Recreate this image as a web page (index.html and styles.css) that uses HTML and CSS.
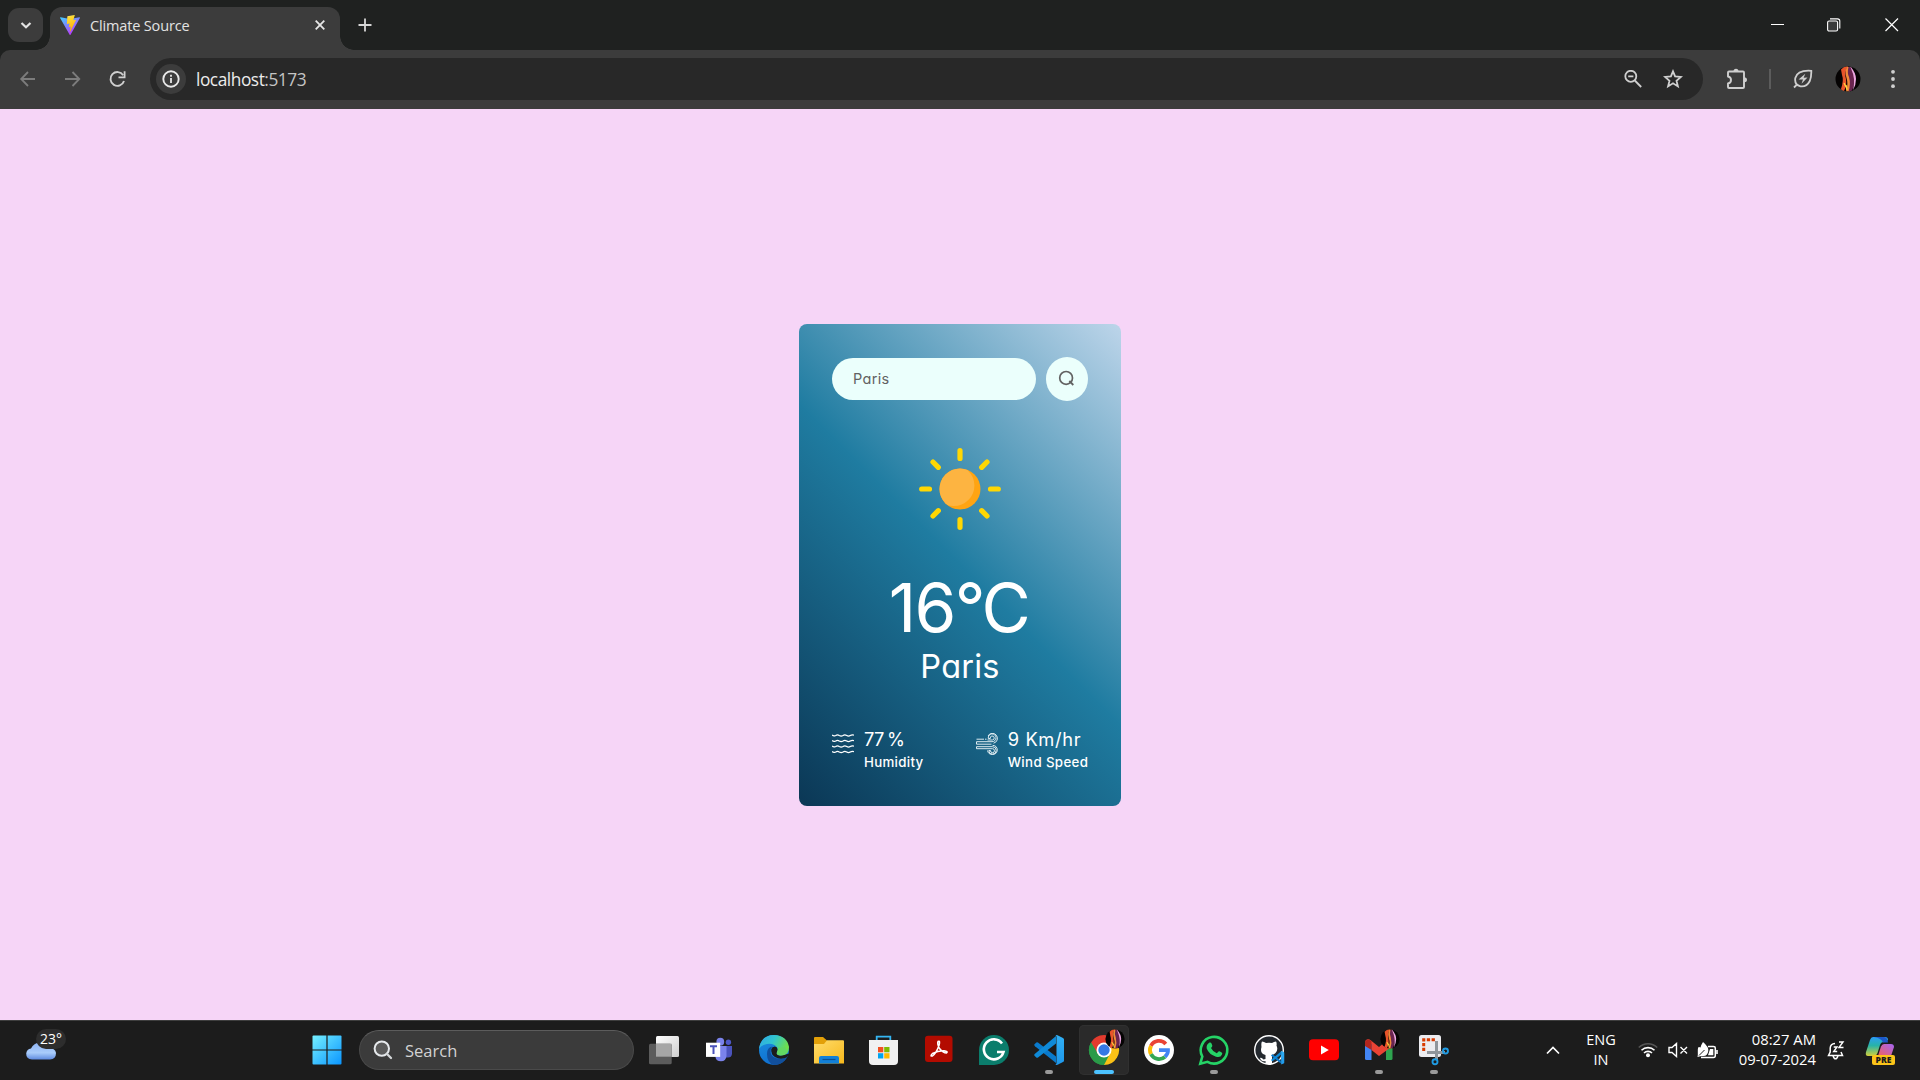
FILE: index.html
```html
<!DOCTYPE html>
<html lang="en">
<head>
<meta charset="utf-8">
<title>Climate Source</title>
<link rel="stylesheet" href="styles.css">
</head>
<body>
<svg class="defs" width="0" height="0" aria-hidden="true">
  <defs>
    <linearGradient id="viteV" x1="0" y1="0" x2=".6" y2="1"><stop offset="0" stop-color="#41d1ff"/><stop offset="1" stop-color="#bd34fe"/></linearGradient>
    <linearGradient id="viteB" x1=".4" y1="0" x2=".6" y2="1"><stop offset="0" stop-color="#ffea83"/><stop offset=".1" stop-color="#ffdd35"/><stop offset="1" stop-color="#ffa800"/></linearGradient>
    <linearGradient id="win" x1="0" y1="0" x2="1" y2="1"><stop offset="0" stop-color="#75f0ff"/><stop offset="1" stop-color="#0a95ff"/></linearGradient>
    <linearGradient id="cloud" x1="0" y1="0" x2="0" y2="1"><stop offset="0" stop-color="#8fb4f4"/><stop offset=".6" stop-color="#a9ccfb"/><stop offset="1" stop-color="#5f8be0"/></linearGradient>
    <linearGradient id="grey" x1="0" y1="0" x2="1" y2="1"><stop offset="0" stop-color="#fff"/><stop offset="1" stop-color="#cfcfcf"/></linearGradient>
    <linearGradient id="edgeT" x1="0" y1="0" x2="1" y2=".4"><stop offset="0" stop-color="#2fa5e8"/><stop offset=".5" stop-color="#31c5cf"/><stop offset="1" stop-color="#6fe04a"/></linearGradient>
    <linearGradient id="edgeB" x1="0" y1="0" x2=".4" y2="1"><stop offset="0" stop-color="#1b8fe0"/><stop offset="1" stop-color="#0f6fd0"/></linearGradient>
    <linearGradient id="fold" x1="0" y1="0" x2="1" y2="1"><stop offset="0" stop-color="#ffdc6b"/><stop offset="1" stop-color="#f7b81c"/></linearGradient>
    <linearGradient id="vsR" x1="0" y1="0" x2="0" y2="1"><stop offset="0" stop-color="#31b0f5"/><stop offset="1" stop-color="#1e97ea"/></linearGradient>
    <linearGradient id="copL" x1="0" y1="0" x2="0" y2="1"><stop offset="0" stop-color="#2b9df5"/><stop offset=".45" stop-color="#27b3a8"/><stop offset="1" stop-color="#d3cf3a"/></linearGradient>
    <linearGradient id="copR" x1="1" y1="0" x2="0" y2="1"><stop offset="0" stop-color="#a565f5"/><stop offset="1" stop-color="#f0605f"/></linearGradient>
    <clipPath id="sunDisc"><circle r="20.500"/></clipPath>
    <symbol id="avatar" viewBox="0 0 26 26">
      <circle cx="13" cy="13" r="12.5" fill="#050303"/>
      <path d="M6 3.500Q9 0 13 .6Q9 6 11 13Q12 20 9 25Q6 24 6 23Q9 14 7 9Z" fill="#e8542a"/>
      <path d="M12 1Q9.500 6 11.500 12Q13.500 18 11 25.300L15 25.200Q18 19 18.500 13Q18.500 7 15 1Z" fill="#f08a3a"/>
      <path d="M13.500 1Q12 7 14 11Q16 18 13.500 25.500L17 24.500Q20 18 19.500 12Q18 5 16 1Z" fill="#6a2450"/>
      <path d="M16 1.200Q21 7 21 13T18 24.200Q19.500 18 19 13T15.500 1Z" fill="#eda6e0"/>
      <path d="M9 17l2 4M11 19l1 5" stroke="#ffd23e" stroke-width="1.300"/>
    </symbol>
    <symbol id="vscode" viewBox="0 0 30 30">
      <path d="M0.500 9.300L2.300 7.600Q3.200 7 4 7.600L22 21.500V28L1 11.200Q-.2 10.200.5 9.300Z" fill="#0a7acc"/>
      <path d="M.5 20.700L2.300 22.400Q3.200 23 4 22.400L22 8.500V1L1 18.800Q-.2 19.800.5 20.700Z" fill="#0f8ad8"/>
      <path d="M21.500.3Q22.500-.2 23.500.2L29 3Q30 3.500 30 4.600V25.400Q30 26.500 29 27L23.500 29.800Q22.300 30.200 21.300 29.400Q22.500 29.600 22.500 28V2Q22.500.5 21.500.3Z" fill="url(#vsR)"/>
    </symbol>
  </defs>
</svg>

<header class="tabs">
  <div class="tab-menu"><svg width="14" height="14" viewBox="0 0 14 14"><path d="M2.500 5L7 9.300L11.500 5" fill="none" stroke="#e3e3e3" stroke-width="2.200"/></svg></div>
  <div class="tab">
    <svg class="fav" width="20" height="20" viewBox="0 0 256 257"><path fill="url(#viteV)" d="M255.153 37.938L134.897 252.976c-2.483 4.440-8.862 4.466-11.382.048L.875 37.958c-2.746-4.814 1.371-10.646 6.827-9.670l120.385 21.517a6.537 6.537 0 0 0 2.322-.004l117.867-21.483c5.438-.991 9.574 4.796 6.877 9.620Z"/><path fill="url(#viteB)" d="M185.432.063L96.440 17.501a3.268 3.268 0 0 0-2.634 3.014l-5.474 92.456a3.268 3.268 0 0 0 3.997 3.378l24.777-5.718c2.318-.535 4.413 1.507 3.936 3.838l-7.361 36.047c-.495 2.426 1.782 4.500 4.151 3.780l15.304-4.649c2.372-.720 4.652 1.360 4.150 3.788l-11.698 56.621c-.732 3.542 3.979 5.473 5.943 2.437l1.313-2.028l72.516-144.720c1.215-2.423-.880-5.186-3.540-4.672l-25.505 4.922c-2.396.462-4.435-1.770-3.759-4.114l16.646-57.705c.677-2.350-1.370-4.583-3.769-4.113Z"/></svg>
    <span class="tab-title">Climate Source</span>
    <svg class="tab-x" width="10" height="10" viewBox="0 0 10 10"><path d="M.7.7L9.300 9.300M9.300.7L.7 9.300" stroke="#e6e6e6" stroke-width="1.800"/></svg>
  </div>
  <svg class="plus" width="14" height="14" viewBox="0 0 14 14"><path d="M7 .5V13.500M.5 7H13.500" stroke="#d6d6d6" stroke-width="1.800"/></svg>
  <div class="win-controls">
    <svg width="14" height="14" viewBox="0 0 14 14"><path d="M0 6.500H13" stroke="#fff"/></svg>
    <svg width="14" height="14" viewBox="0 0 14 14"><rect x=".6" y="3" width="10" height="10" rx="1.500" fill="#3a3b3b" stroke="#fff" stroke-width="1.100"/><path d="M3 .9H10.500Q12.800.9 12.800 3V10.500" fill="none" stroke="#fff" stroke-width="1.100"/></svg>
    <svg width="14" height="14" viewBox="0 0 14 14"><path d="M.5.5L13 13M13 .5L.5 13" stroke="#fff" stroke-width="1.200"/></svg>
  </div>
</header>

<div class="toolbar-back">
<nav class="toolbar">
  <svg class="nav-ico" width="18" height="18" viewBox="0 0 18 18"><path d="M16 9H2.500M9 2L2.200 9L9 16" fill="none" stroke="#7c7c7c" stroke-width="1.800"/></svg>
  <svg class="nav-ico" width="18" height="18" viewBox="0 0 18 18"><path d="M1 9H15M8.500 2L15.300 9L8.500 16" fill="none" stroke="#7c7c7c" stroke-width="1.800"/></svg>
  <svg class="nav-ico" width="18" height="18" viewBox="0 0 18 18"><path d="M15 11A6.900 6.900 0 1 1 14.200 5.200" fill="none" stroke="#d0d0d0" stroke-width="1.900"/><path d="M15.600 1.200V7.300H9.500" fill="none" stroke="#d0d0d0" stroke-width="1.800"/></svg>
  <div class="omnibox">
    <div class="info"><svg width="18" height="18" viewBox="0 0 18 18"><circle cx="9" cy="9" r="7.700" fill="none" stroke="#e8e8e8" stroke-width="1.900"/><path d="M9 8V13M9 4.800V6.700" stroke="#e8e8e8" stroke-width="1.800"/></svg></div>
    <span class="url">localhost<span class="port">:5173</span></span>
    <svg class="ob-zoom" width="18" height="18" viewBox="0 0 18 18"><circle cx="6.800" cy="6.300" r="5.500" fill="none" stroke="#cfcfcf" stroke-width="1.800"/><path d="M10.800 10.500L17.200 17M4.200 6.300H9.400" stroke="#cfcfcf" stroke-width="1.800"/></svg>
    <svg width="20" height="20" viewBox="0 0 20 20"><path d="M10 2.300L12.100 7.400L17.900 7.900L13.500 11.700L14.900 17.400L10 14.300L5.100 17.400L6.500 11.700L2.100 7.900L7.900 7.400Z" fill="none" stroke="#d0d0d0" stroke-width="1.800"/></svg>
  </div>
  <svg class="ext" width="22" height="22" viewBox="0 0 22 22"><path d="M2 4.500Q2 3.500 3 3.500H17Q18 3.500 18 4.500V19Q18 20 17 20H3Q2 20 2 19V15.500Q5 15 5 12T2 8.500Z" fill="none" stroke="#cfcfcf" stroke-width="1.900" stroke-linejoin="round"/><path d="M7.500 3.500Q7.500.8 10 .8T12.500 3.500ZM18 9.200Q21 9.200 21 11.800T18 14.300Z" fill="#cfcfcf"/></svg>
  <i class="divider"></i>
  <svg class="leaf" width="20" height="20" viewBox="0 0 20 20"><path d="M18.300 1.800Q4.500.8 2.300 9Q1.200 15.800 7.500 17.300Q13.500 18.200 16.800 12Q18.500 8 18.300 1.800Z" fill="none" stroke="#cfcfcf" stroke-width="1.800"/><path d="M1 18.500L4 15.500" stroke="#cfcfcf" stroke-width="1.800"/><path d="M12.300 4.800L5.500 10.500L10 10.400L8.500 14.800L14.500 8.600L10.600 8.800Z" fill="#cfcfcf"/></svg>
  <svg class="me" width="26" height="26"><use href="#avatar"/></svg>
  <svg class="dots" width="6" height="20" viewBox="0 0 6 20"><g fill="#cfcfcf"><circle cx="3" cy="2.800" r="1.900"/><circle cx="3" cy="10" r="1.900"/><circle cx="3" cy="17.200" r="1.900"/></g></svg>
</nav>
</div>

<main class="page">
  <section class="card">
    <div class="search-row">
      <div class="field">Paris</div>
      <div class="go"><svg width="18" height="18" viewBox="0 0 18 18"><circle cx="8.100" cy="7.900" r="6.400" fill="none" stroke="#626262" stroke-width="1.700"/><path d="M11.300 11L15.300 15" stroke="#626262" stroke-width="1.800"/></svg></div>
    </div>
    <svg class="sun" width="84" height="84" viewBox="-42 -42 84 84">
      <circle r="20.500" fill="#ffa412"/>
      <g clip-path="url(#sunDisc)"><circle cx="-6.200" cy="-3.500" r="20.600" fill="#fdb441"/></g>
      <g stroke="#ffd703" stroke-width="5.200" stroke-linecap="round"><path d="M0-38.300V-30.500M0 38.300V30.500M-38.300 0H-30.500M38.300 0H30.500M-27-27L-21.700-21.700M27 27L21.700 21.700M-27 27L-21.700 21.700M27-27L21.700-21.700"/></g>
    </svg>
    <div class="temp">16<span class="deg">°</span>C</div>
    <div class="city">Paris</div>
    <div class="stats">
      <div class="stat">
        <svg width="22" height="22" viewBox="0 0 22 22"><g fill="none" stroke="#fff" stroke-width="1.250"><path id="wv" d="M0 1.900Q1.500 3.600 3.700 2.500Q5.500 1.200 7.300 2.500Q9.200 3.700 11 2.500Q12.800 1.200 14.700 2.500Q16.500 3.700 18.300 2.500Q20.300 1.200 22 2.300"/><use href="#wv" y="5.500"/><use href="#wv" y="11"/><use href="#wv" y="16.500"/></g></svg>
        <div><div class="val v1">77 %</div><div class="lbl l1">Humidity</div></div>
      </div>
      <div class="stat">
        <svg width="22" height="22" viewBox="0 0 22 22"><g fill="none" stroke="#e6f1f6" stroke-width=".95"><path d="M.5 6.200H8M9 6.200H10.500M.5 8.700H16A3.900 3.900 0 1 0 12.300 5.500H14.300A2 2 0 1 1 16.300 7H11.500M.5 11.200H15.500M12 3A5 5 0 1 1 17.500 10.200M.5 13.700H16.500A3.700 3.700 0 1 1 12.800 17.500H14.500A2 2 0 1 0 16.500 15.700H.5M11.500 17.500A5 5 0 0 0 21.300 17.500Q21.300 12.500 16.500 12.300M.5 8.700V11.200M.5 13.700V15.700"/></g></svg>
        <div><div class="val v2">9 Km/hr</div><div class="lbl l2">Wind Speed</div></div>
      </div>
    </div>
  </section>
</main>

<footer class="taskbar">
  <div class="weather">
    <svg width="30" height="18" viewBox="0 0 30 18"><path d="M6 17.500Q0 17 .2 11.500Q.8 7 5 6.500Q8 .5 14 .7Q19 1 21.500 6Q29.500 6 30 11Q30 17 24 17.500Z" fill="url(#cloud)"/></svg>
    <span class="deg-badge">23°</span>
  </div>
  <svg class="start" width="30" height="30" viewBox="0 0 30 30"><rect x=".5" y=".5" width="29" height="29" rx="1" fill="url(#win)"/><path d="M15 0V30M0 15H30" stroke="#1c1c1c" stroke-width="1.200"/></svg>
  <div class="tb-search">
    <svg width="20" height="20" viewBox="0 0 20 20"><circle cx="8.800" cy="8.600" r="7.200" fill="#5a5a5a" stroke="#e6e9ec" stroke-width="2"/><path d="M13.800 13.800L18 18" stroke="#d5d8da" stroke-width="2.300" stroke-linecap="round"/></svg>
    <span>Search</span>
  </div>
  <div class="apps">
    <div class="app"><svg viewBox="0 0 50 50"><rect x="17" y="11" width="23" height="21" rx="1.500" fill="url(#grey)"/><rect x="10" y="18.700" width="22.700" height="20.500" rx="1.500" fill="#5c5c5c"/><rect x="17" y="18.700" width="15.700" height="13" fill="#a6a6a6"/></svg></div>
    <div class="app"><svg viewBox="0 0 50 50"><circle cx="34.400" cy="17.300" r="2.700" fill="#4f58c8"/><path d="M31 21H38V29Q37.500 32.500 34 32.500H31Z" fill="#4b53bc"/><circle cx="26.300" cy="16.700" r="3.900" fill="#7b83eb"/><path d="M22 21H32.500V31Q32 36.300 27 36.300T21.500 32Z" fill="#7b83eb"/><rect x="12" y="17.700" width="14.200" height="14.200" fill="#fff"/><path d="M16 21.300H23M19.500 21.300V29" stroke="#4b53bc" stroke-width="2"/></svg></div>
    <div class="app"><svg viewBox="0 0 50 50"><circle cx="25" cy="25" r="15" fill="url(#edgeB)"/><path d="M10 24Q12 10 25 10Q38 10.500 40 22Q40 30.500 32 30.500Q27.500 30 27.500 28.500Q29.500 26 28.500 23Q25 18 18 19Q12 20 10 24Z" fill="url(#edgeT)"/><path d="M18 29Q18 22 23.500 21.500Q20 25 22.500 30Q27 36 37.500 32.500Q33 40.500 25 40Q18 38 18 29Z" fill="#114f9c"/><path d="M22.500 24Q24 21 27 22Q29.500 24 27.500 27.500Q27 30 31 30.800L41 28.500L37.700 32.500Q31 35 26 32Q21.500 29 22.500 24Z" fill="#1c1c1c"/><path d="M27.500 28.500Q28.500 30.500 32 30.500Q37 30.500 39 26.500L36 22L29 23Z" fill="#62d863"/><path d="M22.500 24Q24 21 27 22Q29.500 24 27.500 27.500Q27 29 28 31Q22.500 30 22.500 24Z" fill="#1c1c1c"/></svg></div>
    <div class="app"><svg viewBox="0 0 50 50"><path d="M10 13Q10 12 11 12H19L23 15.500V22H10Z" fill="#e3a008"/><path d="M10 19H20L23 15.300H39Q40 15.300 40 16.300V38.500H10Z" fill="url(#fold)"/><path d="M15 38.500V33Q15 31 17 31H33Q35 31 35 33V38.500Z" fill="#1280d8"/><path d="M18.500 34.500H31.500" stroke="#0a4f94" stroke-width="1.200"/></svg></div>
    <div class="app"><svg viewBox="0 0 50 50"><path d="M17.700 16.500V11.700H31.300V16.500" fill="none" stroke="#35b6f2" stroke-width="1.800"/><path d="M10 15H39V36Q39 40 35 40H14Q10 40 10 36Z" fill="#f1f1f1"/><path d="M19 22h5.300v5.300H19z" fill="#f25022"/><path d="M25.200 22h5.300v5.300h-5.300z" fill="#7fba00"/><path d="M19 28.200h5.300v5.300H19z" fill="#00a4ef"/><path d="M25.200 28.200h5.300v5.300h-5.300z" fill="#ffb900"/></svg></div>
    <div class="app"><svg viewBox="0 0 50 50"><rect x="11" y="10.700" width="27.500" height="26.300" rx="3" fill="#b30b00"/><path d="M24 16.500Q26.500 15 25 20.500Q22 28.500 18.500 31Q15.500 31.500 18.500 28.500Q24 25.500 30 25.700Q34.500 26.500 32.500 28Q29 28 25.500 23.500Q23 19 24 16.500Z" fill="none" stroke="#fff" stroke-width="1.500"/></svg></div>
    <div class="app"><svg viewBox="0 0 50 50"><path d="M10 40V25A15 15 0 1 1 25 40Z" fill="#0b7d6c"/><path d="M33 18.500A10 10 0 1 0 34.500 27H28" fill="none" stroke="#fff" stroke-width="2.600"/></svg></div>
    <div class="app run"><svg viewBox="0 0 50 50"><use href="#vscode" x="10" y="10" width="30" height="30"/></svg></div>
    <div class="app active"><svg viewBox="0 0 50 50"><path d="M25 25L12 17.500A15 15 0 0 1 38 17.500Z" fill="#e33b2e"/><path d="M25 25L38 17.500A15 15 0 0 1 25 40Z" fill="#fbc116"/><path d="M25 25L25 40A15 15 0 0 1 12 17.500Z" fill="#2a9b48"/><path d="M12 17.500L19 29L25 25V18Z" fill="#e33b2e"/><path d="M12 17.500L18.500 28.700L25 32L31 28.500L25 40A15 15 0 0 1 12 17.500Z" fill="#2a9b48"/><circle cx="25" cy="25" r="7.500" fill="#fff"/><circle cx="25" cy="25" r="5.700" fill="#3578e5"/><use href="#avatar" x="26" y="4" width="20" height="20"/></svg></div>
    <div class="app"><svg viewBox="0 0 50 50"><circle cx="25" cy="25" r="15" fill="#fff"/><g fill="none" stroke-width="3.800"><path d="M31.800 19A9 9 0 0 0 17 20.800" stroke="#ea4335"/><path d="M17 20.800A9 9 0 0 0 17 29.200" stroke="#fbbc05"/><path d="M17 29.200A9 9 0 0 0 31 31.800" stroke="#34a853"/><path d="M31 31.800Q34.200 29 34 25.200H25" stroke="#4285f4"/></g></svg></div>
    <div class="app run"><svg viewBox="0 0 50 50"><path d="M11.300 38.700L13.300 31.500A13.300 13.300 0 1 1 18.500 36.800Z" fill="#1c1c1c" stroke="#25d366" stroke-width="2.600"/><path d="M20.500 17.500Q22 17 22.500 18.500L23.300 20.500Q23.500 21.500 22 23Q24 27 27.800 28.300L29.500 26.500Q30 26 31 26.500L33 27.700Q33.500 28 33 29.500Q31.500 33 27 31.700Q20 29.500 17.700 23.500Q17 19.500 20.500 17.500Z" fill="#25d366"/></svg></div>
    <div class="app"><svg viewBox="0 0 50 50"><circle cx="25" cy="25" r="14.300" fill="#24292f" stroke="#fff" stroke-width="1.400"/><path d="M17.500 22Q17 18 18 16.500Q20 16.500 22 18Q25 17.500 28 18Q30 16.500 32 16.500Q33 18 32.500 20.500Q34.500 25 31.500 28Q30 29.500 28 30V39H21.500V36Q17.500 37 16 33Q17.500 32 19.500 34.500L21.500 34V30Q15.500 28.500 17.500 22Z" fill="#fff"/><use href="#vscode" x="27" y="26" width="13.500" height="13.500"/></svg></div>
    <div class="app"><svg viewBox="0 0 50 50"><rect x="10" y="14.300" width="30" height="21" rx="4" fill="#f00"/><path d="M22 20.500V29.500L29.800 25Z" fill="#fff"/></svg></div>
    <div class="app run"><svg viewBox="0 0 50 50"><path d="M11 18H17.500V35H12.500Q11 35 11 33.500Z" fill="#4285f4"/><path d="M32 22H38.500V33.500Q38.500 35 37 35H32Z" fill="#2ea44f"/><path d="M11 19L11.500 15.500Q14 13 17 15.500L25 22L33 15.500L38 17L38.500 21L25 31L17.500 25V19Z" fill="#ea4335"/><path d="M11 21V17Q13 12.500 17.500 16V25Z" fill="#b3261e"/><use href="#avatar" x="26" y="4" width="20" height="20"/></svg></div>
    <div class="app run"><svg viewBox="0 0 50 50"><rect x="10" y="10" width="22" height="22" rx="2.500" fill="#ececf0"/><path d="M14.700 26V14.700H26" fill="none" stroke="#d83b01" stroke-width="3" stroke-dasharray="3.300 1.500"/><path d="M27.500 16V27.500L36 27.500M18 27.500H27.500L27.500 35" fill="none" stroke="#8f959b" stroke-width="3"/><g fill="none" stroke="#1f9be3" stroke-width="1.900"><circle cx="36.500" cy="26" r="2.500"/><circle cx="26" cy="36.700" r="2.500"/></g></svg></div>
  </div>
  <div class="tray">
    <svg class="chev" width="14" height="9" viewBox="0 0 14 9"><path d="M1 7.500L7 1.500L13 7.500" fill="none" stroke="#fff" stroke-width="1.700"/></svg>
    <div class="lang">ENG<br>IN</div>
    <svg class="wifi" width="20" height="16" viewBox="0 0 20 16"><g fill="none" stroke="#fff" stroke-width="1.600"><path d="M.8 5.500A13 13 0 0 1 19.200 5.500" stroke="#555"/><path d="M3.500 8.300A9.300 9.300 0 0 1 16.500 8.300M6 11A5.700 5.700 0 0 1 14 11"/></g><circle cx="10" cy="13.300" r="2" fill="#fff"/></svg>
    <svg class="mute" width="20" height="16" viewBox="0 0 20 16"><path d="M1 5.500H4L8.500 1.500V14.500L4 10.500H1ZM12.500 5L19 11.500M19 5L12.500 11.500" fill="none" stroke="#fff" stroke-width="1.400"/></svg>
    <svg class="batt" width="21" height="17" viewBox="0 0 21 17"><path d="M11 4.500H16.500Q18.300 4.500 18.300 6V13.500Q18.300 15.500 16.500 15.500H4" fill="none" stroke="#fff" stroke-width="1.500"/><path d="M13 7H16.300V13.300H11Z" fill="#fff"/><path d="M19.200 8h1.600v4h-1.600z" fill="#fff"/><path d="M6 0Q12 5 11.300 9Q10.500 14 6.500 14Q3 14 .5 15Q1 13 .8 9Q.7 5 2 5L3.500 5.500Q4 3 6 0Z" fill="#fff"/><path d="M2 13.500L7.500 8" stroke="#1c1c1c" stroke-width="1"/></svg>
    <div class="clock">08:27 AM<br>09-07-2024</div>
    <svg class="bell" width="18" height="19" viewBox="0 0 18 19"><path d="M8 2.500Q3.500 2.800 3.200 7V11L1.500 14.500H15.500L14 11M6 14.700Q7 17.800 8.500 17.800T11 14.700" fill="none" stroke="#fff" stroke-width="1.500"/><path d="M6.700 6H10L6.700 10.500H10.200M12 1H16L12 6.500H16.500" fill="none" stroke="#fff" stroke-width="1.400"/></svg>
    <div class="copilot">
      <svg width="30" height="28" viewBox="0 0 30 28"><path d="M8 1H20Q23 1 23 4L20 6Q16 5.500 15 9L12.500 17Q11.500 20 8 20H3Q0 20 1 16L5 4Q6 1 8 1Z" fill="url(#copL)"/><path d="M9 1H19Q22.500 1.300 23 6.500H18Q16.500 2 9 1Z" fill="#1d58c9"/><path d="M19 8H26Q29 8 29 11L26 20H13L16 10.500Q17 8 19 8Z" fill="url(#copR)"/></svg>
      <span class="pre">PRE</span>
    </div>
  </div>
</footer>
</body>
</html>
```

FILE: styles.css
```css
* { box-sizing: border-box; }
body {
  margin: 0;
  width: 1920px;
  height: 1080px;
  overflow: hidden;
  display: flex;
  flex-direction: column;
  font-family: "Open Sans", "Noto Sans", sans-serif;
  background: #f6d5f7;
}
svg { display: block; flex: none; }
.defs { position: absolute; }

/* Tab strip */
.tabs {
  flex: none;
  height: 50px;
  padding: 0 21px 0 8px;
  display: flex;
  align-items: flex-start;
  background: #1f2120;
}
.tab-menu {
  width: 35px;
  height: 34px;
  margin-top: 8px;
  border-radius: 11px;
  background: #3c3c3c;
  display: flex;
  align-items: center;
  justify-content: center;
}
.tab {
  position: relative;
  width: 290px;
  height: 43px;
  margin: 7px 0 0 7px;
  padding: 0 15px 7px 10px;
  display: flex;
  align-items: center;
  border-radius: 12px 12px 0 0;
  background: #3c3c3c;
}
.tab::before, .tab::after {
  content: "";
  position: absolute;
  bottom: 0;
  width: 14px;
  height: 14px;
}
.tab::before { left: -14px; background: radial-gradient(circle at 0 0, transparent 13.5px, #3c3c3c 14px); }
.tab::after { right: -14px; background: radial-gradient(circle at 100% 0, transparent 13.5px, #3c3c3c 14px); }
.tab-title {
  margin: 0 auto 0 10px;
  color: #e3e3e3;
  font-size: 14.5px;
  letter-spacing: -.15px;
  white-space: nowrap;
}
.plus { margin: 18px 0 0 18px; }
.win-controls { margin: 18px 0 0 auto; display: flex; gap: 43px; }
.win-controls svg:nth-child(2) { margin: 0 1px 0 -1px; }

/* Toolbar */
.toolbar-back { flex: none; background: #1f2120; }
.toolbar {
  height: 59px;
  padding: 0 24px 1px 19px;
  display: flex;
  align-items: center;
  border-radius: 10px 10px 0 0;
  background: #3c3c3c;
}
.nav-ico { margin-right: 27px; }
.nav-ico:nth-child(3) { margin-right: 23px; }
.omnibox {
  width: 1553px;
  height: 42px;
  padding: 0 20px 0 6px;
  display: flex;
  align-items: center;
  border-radius: 21px;
  background: #282828;
}
.info {
  width: 30px;
  height: 30px;
  margin-right: 10px;
  border-radius: 50%;
  background: #3c3c3c;
  display: flex;
  align-items: center;
  justify-content: center;
}
.url { padding-top: 1px; color: #ececec; font-size: 17.3px; letter-spacing: -.45px; line-height: 24px; }
.port { color: #c4c4c4; }
.ob-zoom { margin: 0 21px 0 auto; }
.ext { margin-left: 23px; }
.divider { width: 2px; height: 20px; margin: 0 22px 0 21px; background: #5c5c5c; }
.leaf { margin-right: 22px; }
.me { margin-right: 29px; }

/* Page */
.page {
  flex: 1;
  display: flex;
  align-items: center;
  justify-content: center;
  font-family: Inter, "Open Sans", sans-serif;
  font-feature-settings: "cv11";
}
.card {
  width: 322px;
  height: 482px;
  padding: 33px 33px 0;
  display: flex;
  flex-direction: column;
  border-radius: 8px;
  background: linear-gradient(45deg, #0b3755 0%, #1f7ca1 50%, #bdd5ea 100%);
  color: #fff;
}
.search-row { display: flex; align-items: center; gap: 10px; }
.field {
  width: 204px;
  height: 42px;
  padding-left: 21px;
  border-radius: 21px;
  background: #ebfffc;
  color: #626262;
  font-size: 14.5px;
  line-height: 41px;
  letter-spacing: .3px;
}
.go {
  width: 42px;
  height: 44px;
  border-radius: 50%;
  background: #ebfffc;
  display: flex;
  align-items: center;
  justify-content: center;
}
.sun { margin: 46px auto 0; }
.temp {
  margin-top: 37px;
  height: 80px;
  padding-right: 2px;
  line-height: 80px;
  font-size: 67.5px;
  text-align: center;
  letter-spacing: -1.6px;
}
.deg { letter-spacing: -4px; }
.city { height: 44px; margin-top: -3px; line-height: 44px; font-size: 32.5px; text-align: center; letter-spacing: .2px; }
.stats { margin-top: 37px; display: flex; justify-content: space-between; }
.stat { display: flex; align-items: flex-start; gap: 10px; }
.stat svg { margin-top: 7px; }
.val { height: 26px; line-height: 26px; font-size: 18.3px; white-space: nowrap; }
.lbl { height: 20px; line-height: 20px; font-size: 13.3px; font-weight: 500; white-space: nowrap; }
.v1 { letter-spacing: -.7px; word-spacing: -1px; }
.v2 { letter-spacing: .65px; }
.l1 { letter-spacing: .3px; }
.l2 { letter-spacing: .36px; margin-right: -.36px; }

/* Taskbar */
.taskbar {
  flex: none;
  height: 60px;
  padding-bottom: 1px;
  display: flex;
  align-items: center;
  border-top: 1px solid #3e3e3e;
  background: #1c1c1c;
  color: #fff;
}
.weather { position: relative; width: 312px; padding: 1px 0 0 26px; }
.deg-badge {
  position: absolute;
  left: 36px;
  top: -12px;
  width: 30px;
  height: 20px;
  border-radius: 10px;
  background: #2d2d2d;
  font-size: 14px;
  line-height: 20px;
  text-align: center;
}
.tb-search {
  width: 275px;
  height: 40px;
  margin: 0 2px 0 17px;
  padding-left: 13px;
  display: flex;
  align-items: center;
  gap: 12px;
  border: 1px solid #4a4a4a;
  border-top-color: #5c5c5c;
  border-radius: 20px;
  background: #3b3b3b;
  color: #d2d2d2;
  font-size: 16.5px;
}
.apps { display: flex; gap: 5px; margin-left: 3px; }
.app { position: relative; width: 50px; height: 50px; border-radius: 5px; }
.app svg { width: 50px; height: 50px; }
.run::after, .active::after {
  content: "";
  position: absolute;
  left: 21px;
  bottom: 1px;
  width: 8px;
  height: 4px;
  border-radius: 2px;
  background: #9a9a9a;
}
.active { background: #2a2a2a; box-shadow: inset 0 0 0 1px #303030; }
.active::after { left: 15px; width: 20px; background: #4cc2ff; }
.tray { flex: 1; display: flex; align-items: center; }
.chev { margin-left: 87px; }
.lang {
  width: 56px;
  margin: 0 9px 0 13px;
  padding-bottom: 1px;
  font-size: 14.5px;
  line-height: 20px;
  text-align: center;
}
.mute { margin-left: 10px; }
.batt { margin-left: 9px; }
.clock { width: 90px; margin-left: 8px; padding-bottom: 2px; font-size: 14.8px; line-height: 20px; text-align: right; white-space: nowrap; }
.bell { margin-left: 11px; }
.copilot { position: relative; margin-left: 20px; }
.pre {
  position: absolute;
  left: 7px;
  top: 19px;
  width: 23px;
  height: 10px;
  border-radius: 2px;
  background: #fcc419;
  color: #1c1c1c;
  font-size: 8.5px;
  font-weight: 800;
  line-height: 10px;
  text-align: center;
}
```
